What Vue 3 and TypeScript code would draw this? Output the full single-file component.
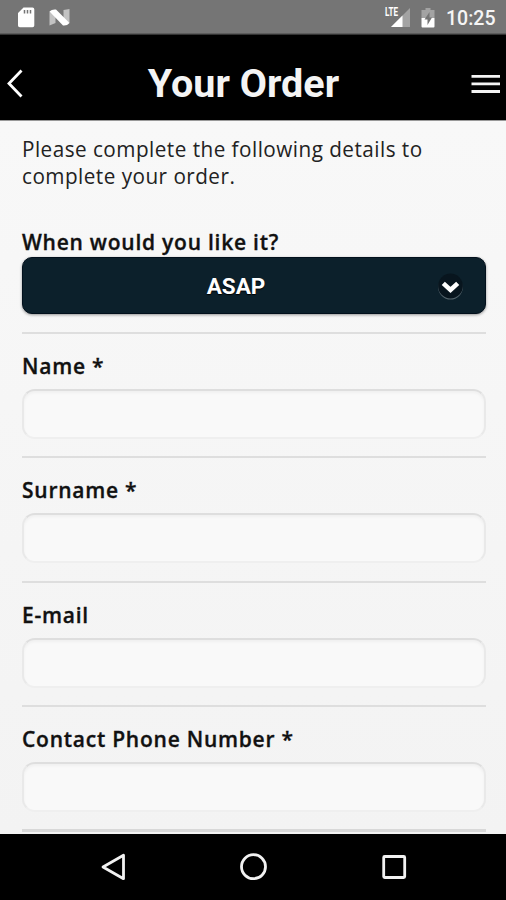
<script setup lang="ts">
import { ref } from 'vue'

interface Field {
  id: string
  label: string
  type: string
}

const fields: Field[] = [
  { id: 'name', label: 'Name *', type: 'text' },
  { id: 'surname', label: 'Surname *', type: 'text' },
  { id: 'email', label: 'E-mail', type: 'email' },
  { id: 'phone', label: 'Contact Phone Number *', type: 'tel' },
]

const values = ref<Record<string, string>>({ name: '', surname: '', email: '', phone: '' })
</script>

<template>
  <div class="screen">
    <div class="status">
      <svg width="80" height="35" viewBox="0 0 80 35">
        <path d="M23.5 7.5H32.500a1.800 1.800 0 0 1 1.800 1.800V25.500a1.800 1.800 0 0 1-1.800 1.800H19.800a1.800 1.800 0 0 1-1.800-1.800V13z" fill="#fff" />
        <path d="M24.500 10v3.500M27.500 10v3.500M30.500 10v3.500" stroke="#757575" stroke-width="1.500" />
        <path d="M49.500 11.500L55.500 15V23L49.500 25.500zM63.500 10L69.500 9V23L63.500 20z" fill="#c2c2c2" />
        <path d="M49.500 11.500Q52 9 56 9.500L69.500 23Q67 26 63 25.500z" fill="#fff" />
      </svg>
      <div class="status-right">
        <svg width="60" height="35" viewBox="0 0 60 35">
          <path d="M30 8V27H11z" fill="#a3a3a3" />
          <path d="M22.500 15.500V27H11z" fill="#fff" />
          <text x="5" y="16.300" class="lte" textLength="13" lengthAdjust="spacingAndGlyphs">LTE</text>
          <path d="M45.500 8h5v2h4v8h-13v-8h4z" fill="#a3a3a3" />
          <path d="M41.500 18h13v8.500a1 1 0 0 1-1 1h-11a1 1 0 0 1-1-1z" fill="#fff" />
          <path d="M49.500 12L44.500 19.500H47.500V25L52 17.500H49.500z" fill="#757575" />
        </svg>
        <span class="clock">10:25</span>
      </div>
    </div>

    <header class="header">
      <svg class="back" width="30" height="30" viewBox="0 0 30 30">
        <path d="M21.500 1.500L9 14.500L21.500 27.500" fill="none" stroke="#fff" stroke-width="2.800" />
      </svg>
      <h1 class="title">Your Order</h1>
      <svg class="menu" width="30" height="20" viewBox="0 0 30 20">
        <path d="M.5 2.300h28.500M.5 9.900h28.500M.5 17.500h28.500" stroke="#f4f4f4" stroke-width="2.800" />
      </svg>
    </header>

    <main class="content">
      <p class="intro">Please complete the following details to complete your order.</p>
      <div class="when">
        <label class="label">When would you like it?</label>
        <button class="select" type="button">
          <span class="select-text">ASAP</span>
          <svg class="chevron" width="30" height="30" viewBox="0 0 30 30">
            <circle cx="15.500" cy="16.200" r="12.300" fill="#56656d" />
            <circle cx="15.500" cy="15" r="12.400" fill="#08151e" />
            <path d="M8.300 12.400L15.500 19L22.700 12.400" fill="none" stroke="#fff" stroke-width="4.600" />
          </svg>
        </button>
      </div>
      <div v-for="f in fields" :key="f.id" class="field">
        <label class="label" :for="f.id">{{ f.label }}</label>
        <input :id="f.id" v-model="values[f.id]" class="input" :type="f.type" />
      </div>
      <div class="field last"></div>
    </main>

    <nav class="nav">
      <svg width="506" height="66" viewBox="0 0 506 66">
        <path d="M123.500 21.300V44.700L103 33z" fill="none" stroke="#f2f2f2" stroke-width="2.800" stroke-linejoin="round" />
        <circle cx="253.500" cy="32.700" r="12" fill="none" stroke="#f2f2f2" stroke-width="2.800" />
        <rect x="383.700" y="22.500" width="21" height="21" rx="1" fill="none" stroke="#f2f2f2" stroke-width="2.800" />
      </svg>
    </nav>
  </div>
</template>

<style>
body {
  margin: 0;
}
</style>

<style scoped>
.screen {
  width: 506px;
  height: 900px;
  display: flex;
  flex-direction: column;
  overflow: hidden;
  background: #f6f6f6;
  font-family: "Open Sans", "Noto Sans", sans-serif;
  color: #222;
}
.status {
  flex: none;
  height: 35px;
  display: flex;
  justify-content: space-between;
  background: linear-gradient(#757575 33px, #444 34px, #222);
}
.status-right {
  display: flex;
}
.lte {
  font: 700 12px Roboto, sans-serif;
  fill: #fff;
}
.clock {
  width: 66px;
  box-sizing: border-box;
  padding-left: 6px;
  font: 500 19.500px/37px Roboto, sans-serif;
  color: #f5f5f5;
}
.header {
  flex: none;
  height: 86px;
  box-sizing: border-box;
  padding-top: 13px;
  border-bottom: 1px solid #999;
  display: flex;
  align-items: center;
  justify-content: space-between;
  background: #000;
}
.back {
  margin-right: -14px;
}
.title {
  margin: 0;
  font: 700 39.500px/50px Roboto, sans-serif;
  color: #f4f4f4;
}
.menu {
  margin-right: 5px;
}
.content {
  height: 713px;
  box-sizing: border-box;
  padding: 14px 20px 0 22px;
  overflow: hidden;
  background: linear-gradient(#f8f8f8, #f3f3f3);
}
.intro {
  margin: 0;
  width: 440px;
  font-size: 22px;
  letter-spacing: 0.500px;
  line-height: 26.500px;
  transform: scaleX(0.941);
  transform-origin: 0 0;
}
.when {
  height: 104px;
  padding-top: 40px;
}
.label {
  display: block;
  width: max-content;
  height: 26px;
  font-size: 22px;
  line-height: 26px;
  font-weight: 600;
  letter-spacing: 0.800px;
  color: #111;
  -webkit-text-stroke: 0.350px #111;
  white-space: nowrap;
  transform: scaleX(0.954);
  transform-origin: 0 0;
}
.select {
  width: 100%;
  height: 57px;
  margin-top: 3px;
  padding: 0 20px 0 0;
  display: flex;
  align-items: center;
  border: 1px solid #02101c;
  border-radius: 10px;
  background: #0c202b;
  box-shadow: 0 1px 3px rgba(0, 0, 0, 0.4);
}
.select-text {
  flex: 1;
  padding-left: 14px;
  font: 700 22.500px/28px Roboto, sans-serif;
  color: #fff;
  text-shadow: 0 1px 1px #000;
}
.field {
  height: 124.300px;
  box-sizing: border-box;
  padding-top: 18px;
  border-top: 2px solid #dedede;
}
.field.last {
  border-top: 3px solid #d8d8d8;
}
.input {
  display: block;
  width: 100%;
  height: 50px;
  box-sizing: border-box;
  margin-top: 11px;
  padding: 0 12px;
  border: 2px solid #e9e9e9;
  border-top-color: #dedede;
  border-bottom-color: #efefef;
  border-radius: 13px;
  outline: none;
  background: #f9f9f9;
  box-shadow: inset 0 2px 3px rgba(0, 0, 0, 0.04);
  font: 22px "Open Sans", sans-serif;
}
.nav {
  flex: none;
  height: 66px;
  background: #000;
}
.nav svg {
  display: block;
}
</style>
